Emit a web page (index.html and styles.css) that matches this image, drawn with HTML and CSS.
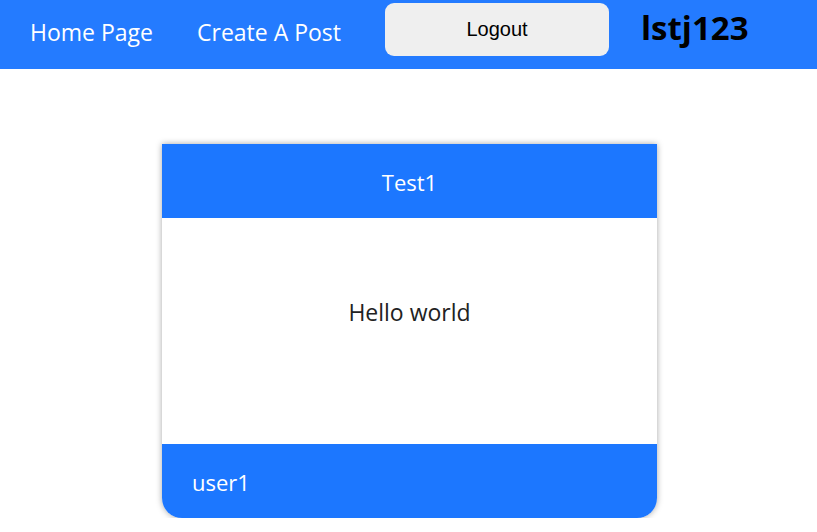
FILE: index.html
```html
<!DOCTYPE html>
<html>
<head>
<meta charset="utf-8">
<link rel="stylesheet" href="styles.css">
</head>
<body>
<nav class="navbar">
  <a class="nav-link" href="#">Home Page</a>
  <a class="nav-link" href="#">Create A Post</a>
  <button class="logout">Logout</button>
  <h1 class="username">lstj123</h1>
</nav>
<main class="page">
  <div class="post">
    <div class="post-title">Test1</div>
    <div class="post-body">Hello world</div>
    <div class="post-footer">user1</div>
  </div>
</main>
</body>
</html>
```
FILE: styles.css
```css
* { box-sizing: border-box; }
html, body { margin: 0; padding: 0; background: #fff; }
body { font-family: "Open Sans", "Noto Sans", sans-serif; }

.navbar {
  height: 69px;
  background: #247bff;
  display: flex;
  align-items: flex-start;
  padding-left: 30px;
}
.nav-link {
  color: #fff;
  text-decoration: none;
  font-size: 23px;
  line-height: 65px;
  margin-right: 44px;
}
.logout {
  margin-top: 3px;
  width: 224px;
  height: 53px;
  border: none;
  border-radius: 9px;
  background: #efefef;
  color: #000;
  font-family: "Liberation Sans", Arial, sans-serif;
  font-size: 20px;
  padding: 0;
}
.username {
  margin: 0 0 0 32px;
  font-size: 33px;
  font-weight: 700;
  line-height: 56px;
  color: #000;
}

.page {
  display: flex;
  justify-content: center;
  padding-top: 75px;
  padding-left: 2px;
}
.post {
  width: 495px;
  height: 374px;
  display: flex;
  flex-direction: column;
  border-radius: 0 0 20px 20px;
  box-shadow: 0 0 6px rgba(0,0,0,0.35);
  overflow: hidden;
  font-size: 22px;
}
.post-title {
  height: 74px;
  background: #1c77ff;
  color: #fff;
  display: flex;
  align-items: center;
  justify-content: center;
  padding-top: 2px;
}
.post-body {
  flex: 1;
  display: flex;
  align-items: center;
  justify-content: center;
  color: #222;
  background: #fff;
  padding-bottom: 38px;
  font-size: 23px;
}
.post-footer {
  height: 74px;
  background: #1c77ff;
  color: #fff;
  display: flex;
  align-items: center;
  padding-left: 30px;
  padding-top: 2px;
}
```
